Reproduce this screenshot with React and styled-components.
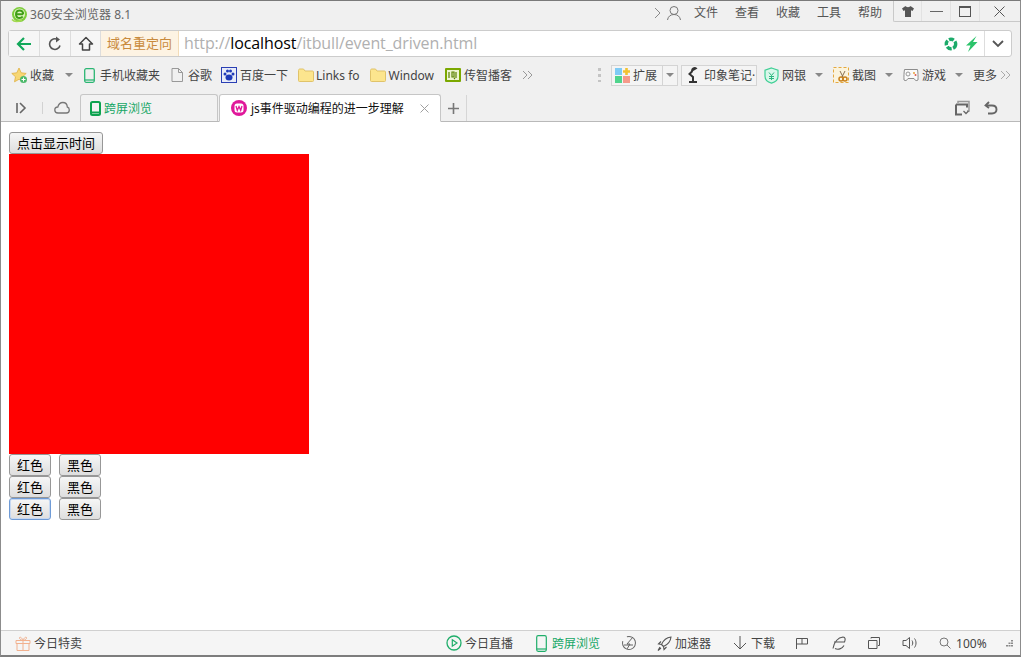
import React from 'react';
import styled, { createGlobalStyle } from 'styled-components';

const Global = createGlobalStyle`
  html, body { margin: 0; padding: 0; background: #fff; }
  #root { width: 1021px; height: 657px; overflow: hidden; }
  * { box-sizing: border-box; }
`;

const FONT = `"Noto Sans", "Noto Sans CJK SC", sans-serif`;

const Win = styled.div`
  width: 1021px; height: 657px; display: flex; flex-direction: column;
  border: 1px solid #8c8c8c; border-top-color: #7a7a7a; border-bottom: 2px solid #7d7d7d;
  font-family: ${FONT}; font-size: 12px; color: #444; background: #f0f0f0;
`;
const TitleBar = styled.div`
  height: 28px; flex: none; display: flex; align-items: flex-start; padding-left: 10px;
`;
const LogoWrap = styled.div` margin-top: 5px; flex: none; `;
const TitleText = styled.span`
  margin: 6px 0 0 2px; color: #666; line-height: 16px; white-space: nowrap; letter-spacing: 0.05px;
`;
const Spacer = styled.div` flex: 1; `;
const MenuGroup = styled.div`
  display: flex; align-items: center; height: 24px; margin-right: 11px;
`;
const Menu = styled.span`
  margin-left: ${p => p.$ml ?? 17}px; color: #555; line-height: 24px; white-space: nowrap;
`;
const Controls = styled.div`
  width: 127px; height: 21px; display: flex; border: 1px solid #c9c9c9; border-width: 0 0 1px 1px;
  border-bottom-left-radius: 2px; margin-top: 0;
`;
const Control = styled.div`
  height: 20px; width: ${p => p.$w}px; display: flex; align-items: center; justify-content: center;
  border-right: ${p => p.$last ? 'none' : '1px solid #e2e2e2'};
`;
const AddressBar = styled.div`
  height: 27px; flex: none; margin: 1px 8px 0 7px; display: flex; align-items: center;
  background: #fff; border: 1px solid #ccc; border-radius: 3px;
`;
const NavBtn = styled.div`
  width: ${p => p.$w ?? 31}px; height: 25px; flex: none; display: flex; align-items: center; justify-content: center;
  background: #f6f6f6; border-right: 1px solid #ddd;
`;
const Redirect = styled.div`
  width: 78px; height: 25px; flex: none; background: #fdf3e3; border-right: 1px solid #f3dcb8;
  color: #c98a3c; font-size: 13px; line-height: 25px; text-align: center; white-space: nowrap;
`;
const Url = styled.div`
  margin-left: 5px; font-size: 16px; letter-spacing: -0.1px; color: #b0b0b0; white-space: nowrap; line-height: 25px;
  font-family: "Open Sans", "Noto Sans", sans-serif;
  b { font-weight: 400; color: #000; }
`;
const AddrRight = styled.div`
  height: 25px; display: flex; align-items: center; gap: 7px; padding-right: 6px;
`;
const DropBtn = styled.div`
  width: 27px; height: 25px; display: flex; align-items: center; justify-content: center; border-left: 1px solid #ddd;
`;
const BookBar = styled.div`
  height: 36px; flex: none; display: flex; align-items: center; padding: 0 0 0 10px; white-space: nowrap;
`;
const Book = styled.div`
  display: flex; align-items: center; margin-left: ${p => p.$ml ?? 0}px; gap: ${p => p.$gap ?? 3}px; color: #444; height: 20px; flex: none;
`;
const Caret = styled.span`
  width: 0; height: 0; flex: none; margin-left: ${p => p.$ml ?? 6}px;
  border-left: 4px solid transparent; border-right: 4px solid transparent; border-top: 4px solid #888;
`;
const Boxed = styled.div`
  height: 21px; margin-left: ${p => p.$ml}px; width: ${p => p.$w}px; flex: none; display: flex; align-items: center;
  border: 1px solid #d4d4d4; padding-left: ${p => p.$pl ?? 3}px; gap: ${p => p.$gap ?? 3}px; overflow: hidden; background: #f4f4f4;
`;
const BoxDrop = styled.span`
  margin-left: auto; width: 15px; height: 19px; border-left: 1px solid #d4d4d4; display: flex; align-items: center; justify-content: center;
`;
const Dots = styled.span`
  margin-left: 65px; width: 3px; height: 14px; flex: none;
  background: repeating-linear-gradient(#c4c4c4 0 3px, transparent 3px 6px);
`;
const TabBar = styled.div`
  height: 28px; flex: none; margin-top: 1px; display: flex; align-items: flex-end; border-bottom: 1px solid #b9b9b9; padding-left: 15px; position: relative;
`;
const TabTools = styled.div`
  width: 64px; height: 27px; flex: none; display: flex; align-items: center;
`;
const Sep = styled.span`
  width: 1px; height: 12px; background: #d2d2d2; margin: 0 ${p => p.$r ?? 11}px 0 ${p => p.$l ?? 14}px; flex: none;
`;
const Tab = styled.div`
  height: ${p => p.$active ? 28 : 27}px; width: ${p => p.$w}px; flex: none; margin-left: ${p => p.$ml ?? 0}px;
  display: flex; align-items: center; padding-left: ${p => p.$pl}px; gap: ${p => p.$gap ?? 2}px;
  background: ${p => p.$active ? '#fff' : '#f2f2f2'}; color: ${p => p.$active ? '#111' : '#16a765'};
  border: 1px solid #c6c6c6; border-bottom: ${p => p.$active ? '1px solid #fff' : 'none'}; margin-bottom: ${p => p.$active ? -1 : 0}px;
  border-radius: 3px 3px 0 0; white-space: nowrap; position: relative;
`;
const TabClose = styled.span`
  position: absolute; right: 11px; top: 9px; display: flex;
`;
const AddTab = styled.div`
  width: 26px; height: 26px; flex: none; display: flex; align-items: center; justify-content: center; border-right: 1px solid #d6d6d6;
`;
const TabRight = styled.div`
  margin-left: auto; height: 27px; display: flex; align-items: center; gap: 13px; padding-right: 22px;
`;
const Page = styled.div`
  flex: 1; background: #fff; padding: 10px 0 0 8px; display: flex; flex-direction: column; align-items: flex-start; min-height: 0;
`;
const Btn = styled.button`
  height: 22px; width: ${p => p.$w}px; padding: 0; margin: 0 ${p => p.$mr ?? 0}px 0 0; flex: none;
  font-family: "Noto Sans CJK SC", sans-serif; font-size: 13px; line-height: 18px; color: #000;
  background: linear-gradient(#f6f6f6, #dedede);
  border: 1px solid ${p => p.$focus ? '#6f9bd6' : '#979797'}; border-radius: 3px;
  box-shadow: ${p => p.$focus ? 'inset 0 0 0 1px #c6d8f2' : 'none'};
`;
const RedBox = styled.div` width: 300px; height: 300px; background: #f00; flex: none; `;
const BtnRow = styled.div` display: flex; `;
const Status = styled.div`
  height: 25px; flex: none; display: flex; align-items: center; border-top: 1px solid #d0d0d0; background: #f5f5f5;
  padding-left: 14px; white-space: nowrap; color: #444;
`;
const SItem = styled.div`
  display: flex; align-items: center; gap: ${p => p.$gap ?? 3}px; margin-left: ${p => p.$ml ?? 0}px; flex: none;
  color: ${p => p.$green ? '#16a765' : '#444'};
`;

const Svg = ({ s = 16, w, h, children, vb }) => (
  <svg width={w ?? s} height={h ?? s} viewBox={vb ?? `0 0 ${w ?? s} ${h ?? s}`} fill="none" style={{ flex: 'none', display: 'block' }}>{children}</svg>
);

const Logo = () => (
  <Svg s={17}>
    <circle cx="8.500" cy="8.500" r="7.500" fill="#7ccc3a" />
    <circle cx="8.500" cy="8" r="5.500" fill="#e6f6c8" />
    <path d="M5 8.200h7.200M12.200 8.200c0-2.200-1.500-3.800-3.700-3.800S5 6 5 8.200s1.500 3.800 3.500 3.800c1.400 0 2.500-.5 3.200-1.500" stroke="#3f9e17" strokeWidth="2" />
    <path d="M1 13.500c2 2.500 6 2.500 10 .5" stroke="#a3d94f" strokeWidth="1.500" />
  </Svg>
);
const Chevron = () => <Svg w={8} h={12}><path d="M1 1l5 5-5 5" stroke="#8a8a8a" /></Svg>;
const User = () => <Svg s={16}><circle cx="8" cy="5.500" r="4" stroke="#777" /><path d="M1.500 15c.5-3.500 3-5.500 6.500-5.500s6 2 6.500 5.500" stroke="#777" /></Svg>;
const Shirt = () => <Svg w={12} h={11}><path d="M3.500 0L0 2.500 1.500 5l1.500-.8V11h6V4.200l1.500.8L12 2.500 8.500 0C8 1.500 4 1.500 3.500 0z" fill="#555" /></Svg>;
const Back = () => <Svg s={18}><path d="M16 9H3M9 3L3 9l6 6" stroke="#12a85a" strokeWidth="2.200" /></Svg>;
const Reload = () => <Svg s={16}><path d="M13 9.500A5.300 5.300 0 1 1 10.500 3.500" stroke="#555" strokeWidth="1.600" /><path d="M9 0.500l4 3-4 3z" fill="#555" /></Svg>;
const HomeI = () => <Svg s={16}><path d="M8 1.500L1.500 8H4.500V14H11.500V8H14.500z" stroke="#444" strokeWidth="1.500" strokeLinejoin="round" /></Svg>;
const Aperture = () => (
  <Svg s={14}>
    <circle cx="7" cy="7" r="4.700" stroke="#1cab6a" strokeWidth="3.400" strokeDasharray="5 1.500" />
    <circle cx="7" cy="7" r="2" fill="#fff" />
  </Svg>
);
const Bolt = () => <Svg w={13} h={16}><path d="M11.500 0L1 9.500h4.500L3 16l9.500-10H8z" fill="#2cc36b" /></Svg>;
const Down = () => <Svg w={12} h={8}><path d="M1 1l5 5 5-5" stroke="#555" strokeWidth="1.800" /></Svg>;
const Star = () => (
  <Svg s={17}>
    <path d="M8 1l2.200 4.800 5 .6-3.700 3.400 1 5L8 12.300 3.500 14.800l1-5L.8 6.400l5-.6z" fill="#f7d774" stroke="#e0b040" strokeWidth=".8" />
    <circle cx="12.500" cy="12.500" r="3.500" fill="#4cb96a" />
    <path d="M12.500 10.500v4M10.500 12.500h4" stroke="#fff" />
  </Svg>
);
const Phone = ({ c = '#2bb673', w = 11, h = 15, sw = 1.300 }) => (
  <Svg w={w} h={h}><rect x=".7" y=".7" width={w - 1.400} height={h - 1.400} rx="1.500" stroke={c} strokeWidth={sw} /><path d={`M1 ${h - 3}h${w - 2}`} stroke={c} strokeWidth={sw} /></Svg>
);
const Doc = () => <Svg w={12} h={14}><path d="M1 .5h6.500l4 4V13.500H1zM7.500.5v4h4" stroke="#999" /></Svg>;
const Paw = () => (
  <Svg s={16}>
    <rect width="16" height="16" fill="#e8ecf8" /><rect x=".5" y=".5" width="15" height="15" stroke="#2a3fb4" />
    <g fill="#1f3ab8"><ellipse cx="8" cy="10.500" rx="3.500" ry="3" /><circle cx="4" cy="7" r="1.500" /><circle cx="6.500" cy="4" r="1.500" /><circle cx="9.500" cy="4" r="1.500" /><circle cx="12" cy="7" r="1.500" /></g>
  </Svg>
);
const Folder = () => <Svg w={16} h={14}><path d="M.5 2.500C.5 1.500 1 1 2 1h3.500l1.500 2h7.500c.7 0 1 .5 1 1v8.500c0 .7-.3 1-1 1H1.500c-.7 0-1-.3-1-1z" fill="#fce58e" stroke="#e0c36a" /></Svg>;
const Iqiyi = () => (
  <Svg s={16}>
    <rect width="16" height="14" y="1" fill="#7ba800" rx="1" />
    <rect x="2" y="3" width="12" height="10" fill="#eef5d4" />
    <path d="M4 5v6M7 5h2v5H7zM9 11l1 1M11 5v6" stroke="#5a8200" strokeWidth="1.200" />
  </Svg>
);
const Dbl = ({ c = '#999' }) => <Svg w={11} h={10}><path d="M1 1l4 4-4 4M6 1l4 4-4 4" stroke={c} /></Svg>;
const Ext = () => (
  <Svg s={15}>
    <rect x="0" y="0" width="7" height="7" fill="#7ecbf5" /><rect x="0" y="8" width="7" height="7" fill="#4fd48c" /><rect x="8" y="8" width="7" height="7" fill="#f59a8a" />
    <path d="M11.500 0v7M8 3.500h7" stroke="#f2c230" strokeWidth="2.600" />
  </Svg>
);
const Lamp = () => <Svg w={12} h={16}><path d="M2 15h8M6 15V10L2.500 7l3-3" stroke="#333" strokeWidth="2" /><path d="M4.500 5a3.500 3.500 0 0 1 6-3.500z" fill="#333" /></Svg>;
const Shield = () => (
  <Svg w={15} h={17}><path d="M7.500 1l6.500 2.200v6c0 3.500-3 6-6.500 7C4 15.200 1 12.700 1 9.200v-6z" fill="#d9f7ea" stroke="#3fcf95" strokeWidth="1.200" /><path d="M5 5.500l2.500 3 2.500-3M7.500 8.500V13M5 9.500h5M5 11.500h5" stroke="#2eb780" /></Svg>
);
const Shot = () => (
  <Svg s={16}>
    <rect x=".5" y=".5" width="15" height="15" fill="#fbf3dc" stroke="#e5a93f" strokeDasharray="3 2" />
    <circle cx="8" cy="12" r="2" stroke="#c9811c" strokeWidth="1.500" /><circle cx="12" cy="12" r="2" stroke="#c9811c" strokeWidth="1.500" />
    <path d="M7 4l3 6M12 4L9 10" stroke="#8a7050" />
  </Svg>
);
const Game = () => (
  <Svg w={16} h={14}>
    <path d="M1.500 1.500h13c.5 3 .7 7 .5 10.500-1.500 1.200-3 .5-4-1.500H5c-1 2-2.500 2.700-4 1.500-.2-3.500 0-7.500.5-10.500z" fill="#fafafa" stroke="#8c8c8c" />
    <circle cx="5" cy="6" r="2" stroke="#999" /><circle cx="11" cy="5" r="1" fill="#e8a33d" /><circle cx="12.500" cy="7" r="1" fill="#e25b4f" />
  </Svg>
);
const Expand = () => <Svg w={12} h={12}><path d="M1 1v10M4 1l5 5-5 5" stroke="#666" strokeWidth="1.600" /></Svg>;
const CloudI = () => <Svg w={16} h={13}><path d="M4 12C1.500 12 .8 10.500.8 9c0-1.700 1.400-3 3-3 .7-2.500 2.500-4.500 5-4.500 2.800 0 4.400 2 4.500 4.500 1.300.3 2 1.500 2 3 0 1.600-1 3-3 3z" stroke="#777" strokeWidth="1.300" /></Svg>;
const TabPhone = () => <Svg w={11} h={15}><rect x="1" y="1" width="9" height="13" rx="1.500" stroke="#0da24f" strokeWidth="2" /><path d="M1 11.500h9" stroke="#0da24f" strokeWidth="2" /></Svg>;
const Wamp = () => (
  <Svg s={16}>
    <circle cx="8" cy="8" r="8" fill="#e0189a" />
    <rect x="3.500" y="3.500" width="9" height="9" rx="2.500" fill="#fff" />
    <path d="M5 6l1.300 4.300L8 6.500l1.700 3.800L11 6" stroke="#e0189a" strokeWidth="1.300" />
  </Svg>
);
const Close = () => <Svg w={9} h={9}><path d="M.5.500l8 8M8.500.500l-8 8" stroke="#a0a0a0" /></Svg>;
const PlusI = () => <Svg w={11} h={11}><path d="M5.500 0v11M0 5.500h11" stroke="#777" strokeWidth="1.600" /></Svg>;
const Restore = () => (
  <Svg w={16} h={16}><path d="M3 3V1.500h11V11h-2" stroke="#999" strokeWidth="1.500" /><path d="M1 4.500h11v3M1 4.500v10h6" stroke="#666" strokeWidth="2" /><path d="M8.500 11l2.500 2.500L13.500 11" stroke="#666" strokeWidth="1.300" /></Svg>
);
const Undo = () => <Svg w={14} h={14}><path d="M5 1L1.500 4.500 5 7" stroke="#666" strokeWidth="1.800" /><path d="M2 4.500h6c3 0 4.500 1.800 4.500 4s-1.500 4-4.500 4H4" stroke="#666" strokeWidth="1.900" /></Svg>;
const GiftI = () => (
  <Svg w={16} h={15}><path d="M1 4.500h14v3H1zM2 7.500h12V14.500H2zM8 4.500v10M8 4.500C6 4 4 3 4.500 1.500 5.500.5 7.500 2.500 8 4.500zM8 4.500c.5-2 2.500-4 3.500-3C12 3 10 4 8 4.500z" stroke="#f1b18f" /></Svg>
);
const Play = () => <Svg s={16}><circle cx="8" cy="8" r="7" stroke="#1fae6a" strokeWidth="1.300" /><path d="M6.300 4.800L11 8l-4.700 3.200z" stroke="#1fae6a" strokeWidth="1.200" /></Svg>;
const Swirl = () => <Svg s={16}><circle cx="8" cy="8" r="6.500" stroke="#666" transform="rotate(-20 8 8)" strokeDasharray="24 6" /><path d="M12 2L6 9h3l-3 5M3 10h9" stroke="#666" /></Svg>;
const Rocket = () => <Svg w={15} h={15}><path d="M14 1C9.500 1.500 6 5 4.500 8.500L6.500 10.500C10 9 13.500 5.500 14 1zM4.500 8.500L1.500 8 4 5.500M6.500 10.500L7 13.500 9.500 11M3 11l-2 3.500L4 12" stroke="#555" strokeWidth="1.100" /></Svg>;
const DownArrow = () => <Svg w={14} h={14}><path d="M7 0v13M1 7l6 6 6-6" stroke="#555" /></Svg>;
const Flag = () => <Svg w={12} h={11}><path d="M.5 11V.500h11v5.500H6V.500M.5 6H6" stroke="#555" /></Svg>;
const Ie = () => <Svg w={15} h={14}><path d="M2 12.500C3 6 7 1.500 12 1c2.500 0 2.500 2.500 1.500 5H3M13 9.500c-2 3.500-6 4.500-9 3" stroke="#555" strokeWidth="1.100" /></Svg>;
const Windows = () => <Svg w={12} h={12}><path d="M.5 3.500h8.500v8H.5zM3 1.500V.500h8.500v8H10" stroke="#555" /></Svg>;
const Sound = () => <Svg w={15} h={14}><path d="M1 4.500h3L7.500 1.500v11L4 9.500H1zM10 4.500c1 1.500 1 3.500 0 5M12.500 2.500c2 2.500 2 6.500 0 9" stroke="#555" /></Svg>;
const Mag = () => <Svg w={12} h={12}><circle cx="5" cy="5" r="4" stroke="#777" /><path d="M8 8l3.500 3.500" stroke="#777" /></Svg>;
const Grip = () => <Svg w={7} h={7}><g fill="#8a8a8a"><rect x="5" y="0" width="2" height="1.500" /><rect x="2.500" y="2.500" width="2" height="1.500" /><rect x="5" y="2.500" width="2" height="1.500" /><rect x="0" y="5" width="2" height="1.500" /><rect x="2.500" y="5" width="2" height="1.500" /><rect x="5" y="5" width="2" height="1.500" /></g></Svg>;

export default function App() {
  return (
    <>
      <Global />
      <Win>
        <TitleBar>
          <LogoWrap><Logo /></LogoWrap>
          <TitleText>360安全浏览器 8.1</TitleText>
          <Spacer />
          <MenuGroup>
            <Chevron />
            <Menu $ml={4}><User /></Menu>
            <Menu $ml={12}>文件</Menu>
            <Menu>查看</Menu>
            <Menu>收藏</Menu>
            <Menu>工具</Menu>
            <Menu>帮助</Menu>
          </MenuGroup>
          <Controls>
            <Control $w={28}><Shirt /></Control>
            <Control $w={29}><Svg w={13} h={3}><path d="M0 1.500h13" stroke="#666" /></Svg></Control>
            <Control $w={29}><Svg w={12} h={11}><rect x=".5" y=".5" width="11" height="10" stroke="#555" /><path d="M0 1.500h12" stroke="#555" /></Svg></Control>
            <Control $w={38} $last><Svg w={11} h={11}><path d="M.5.500l10 10M10.500.500l-10 10" stroke="#555" /></Svg></Control>
          </Controls>
        </TitleBar>
        <AddressBar>
          <NavBtn><Back /></NavBtn>
          <NavBtn><Reload /></NavBtn>
          <NavBtn $w={30}><HomeI /></NavBtn>
          <Redirect>域名重定向</Redirect>
          <Url>http://<b>localhost</b>/itbull/event_driven.html</Url>
          <Spacer />
          <AddrRight><Aperture /><Bolt /></AddrRight>
          <DropBtn><Down /></DropBtn>
        </AddressBar>
        <BookBar>
          <Book $gap={2}><Star />收藏<Caret $ml={9} /></Book>
          <Book $ml={11} $gap={5}><Phone />手机收藏夹</Book>
          <Book $ml={11} $gap={5}><Doc />谷歌</Book>
          <Book $ml={9}><Paw />百度一下</Book>
          <Book $ml={10} $gap={2}><Folder />Links fo</Book>
          <Book $ml={10}><Folder />Window</Book>
          <Book $ml={11}><Iqiyi />传智播客</Book>
          <Book $ml={10}><Dbl /></Book>
          <Dots />
          <Boxed $ml={10} $w={67}><Ext />扩展<BoxDrop><Caret $ml={0} /></BoxDrop></Boxed>
          <Boxed $ml={3} $w={76} $pl={5} $gap={5}><Lamp />印象笔记·</Boxed>
          <Book $ml={7}><Shield />网银<Caret /></Book>
          <Book $ml={10}><Shot />截图<Caret /></Book>
          <Book $ml={10}><Game />游戏<Caret /></Book>
          <Book $ml={10}>更多<Dbl c="#aaa" /></Book>
        </BookBar>
        <TabBar>
          <TabTools>
            <Expand />
            <Sep />
            <CloudI />
          </TabTools>
          <Tab $w={138} $pl={9} $gap={3}><TabPhone />跨屏浏览</Tab>
          <Tab $w={222} $pl={11} $ml={1} $gap={4} $active><Wamp />js事件驱动编程的进一步理解<TabClose><Close /></TabClose></Tab>
          <AddTab><PlusI /></AddTab>
          <TabRight><Restore /><Undo /></TabRight>
        </TabBar>
        <Page>
          <Btn $w={94}>点击显示时间</Btn>
          <RedBox />
          <BtnRow><Btn $w={42} $mr={8}>红色</Btn><Btn $w={42}>黑色</Btn></BtnRow>
          <BtnRow><Btn $w={42} $mr={8}>红色</Btn><Btn $w={42}>黑色</Btn></BtnRow>
          <BtnRow><Btn $w={42} $mr={8} $focus>红色</Btn><Btn $w={42}>黑色</Btn></BtnRow>
        </Page>
        <Status>
          <SItem><GiftI />今日特卖</SItem>
          <SItem $ml={364}><Play />今日直播</SItem>
          <SItem $ml={23} $green $gap={5}><Phone c="#1fae6a" w={11} h={17} sw={1.200} />跨屏浏览</SItem>
          <SItem $ml={21}><Swirl /></SItem>
          <SItem $ml={20} $gap={3}><Rocket />加速器</SItem>
          <SItem $ml={22} $gap={4}><DownArrow />下载</SItem>
          <SItem $ml={21}><Flag /></SItem>
          <SItem $ml={23}><Ie /></SItem>
          <SItem $ml={22}><Windows /></SItem>
          <SItem $ml={22}><Sound /></SItem>
          <SItem $ml={22} $gap={5}><Mag />100%</SItem>
          <SItem $ml={19}><Grip /></SItem>
        </Status>
      </Win>
    </>
  );
}
